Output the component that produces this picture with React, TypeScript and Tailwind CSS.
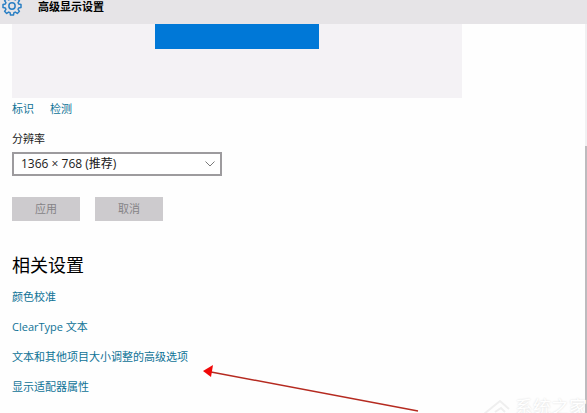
// src/pages/AdvancedDisplaySettings.tsx
import { useState } from 'react';
import type { ReactNode } from 'react';

const relatedLinks = [
  '颜色校准',
  'ClearType 文本',
  '文本和其他项目大小调整的高级选项',
  '显示适配器属性',
];

const resolutions = ['1366 × 768 (推荐)', '1280 × 720', '1024 × 768', '800 × 600'];

function SettingsLink({ children }: { children: ReactNode }) {
  return (
    <a href="#" className="text-[#0e7296] hover:text-gray-500">
      {children}
    </a>
  );
}

function GearIcon() {
  return (
    <svg viewBox="0 0 24 24" className="size-[18px] shrink-0 overflow-visible" fill="none" stroke="#2a7fc4" strokeWidth="2" strokeLinejoin="round" aria-hidden="true">
      <path d="M10 0h4l.6 3.1 1.8.8L19.100 2.100l2.800 2.800-1.800 2.700.8 1.800L24 10v4l-3.100.6-.8 1.800 1.800 2.700-2.800 2.800-2.700-1.800-1.800.8L14 24h-4l-.6-3.100-1.800-.8-2.700 1.800-2.800-2.800 1.800-2.700-.8-1.800L0 14v-4l3.100-.6.8-1.800-1.800-2.700 2.800-2.800 2.700 1.800 1.800-.8z" />
      <circle cx="12" cy="12" r="4.200" />
    </svg>
  );
}

export default function AdvancedDisplaySettings() {
  const [resolution, setResolution] = useState(resolutions[0]);

  return (
    <div className="relative flex h-screen flex-col overflow-hidden bg-[#fefefe] font-['Open_Sans','Noto_Sans_CJK_SC',sans-serif] text-[11px] leading-4 text-[#1a1a1a]">
      {/* Title bar, scrolled partly out of view */}
      <header className="h-6 shrink-0 bg-[#e6e4e7]">
        <div className="flex h-3 items-center gap-[17px] px-[3px]">
          <GearIcon />
          <h1 className="pt-px leading-3 font-bold text-black">高级显示设置</h1>
        </div>
      </header>

      <div className="flex min-h-0 flex-1">
        <main className="min-w-0 flex-1 pl-3">
          {/* Monitor preview */}
          <div className="flex h-[74px] max-w-[450px] justify-center bg-[#f4f2f5]">
            <div className="h-[25px] w-[164px] bg-[#0078d7]" />
          </div>

          <div className="mt-[3px] flex gap-4">
            <SettingsLink>标识</SettingsLink>
            <SettingsLink>检测</SettingsLink>
          </div>

          <label htmlFor="resolution" className="mt-[14px] block">
            分辨率
          </label>
          <div className="relative mt-[5px] w-[210px]">
            <select
              id="resolution"
              value={resolution}
              onChange={(e) => setResolution(e.target.value)}
              className="block h-6 w-full appearance-none border-2 border-[#9d9b9e] bg-white pl-[7px] text-xs leading-4 outline-none"
            >
              {resolutions.map((item) => (
                <option key={item}>{item}</option>
              ))}
            </select>
            <svg viewBox="0 0 10 6" className="pointer-events-none absolute top-[9px] right-[7px] h-[6px] w-[10px]" fill="none" stroke="#7a7a7a" aria-hidden="true">
              <path d="M.5.5 5 5 9.500.5" />
            </svg>
          </div>

          <div className="mt-[21px] flex gap-[15px]">
            <button type="button" disabled className="h-6 w-[68px] bg-[#cdcbce] text-[#858386]">
              应用
            </button>
            <button type="button" disabled className="h-6 w-[68px] bg-[#cdcbce] text-[#858386]">
              取消
            </button>
          </div>

          <h2 className="mt-8 text-lg leading-6 text-black">相关设置</h2>
          <ul className="mt-3 space-y-[14px]">
            {relatedLinks.map((item) => (
              <li key={item}>
                <SettingsLink>{item}</SettingsLink>
              </li>
            ))}
          </ul>
        </main>

        {/* Scrollbar */}
        <div className="w-[2px] bg-[#f1f0f2] pt-[122px]">
          <div className="h-full bg-[#bdbbbe]" />
        </div>
      </div>

      {/* Pointer to the text size option */}
      <svg viewBox="0 0 216 47" className="pointer-events-none absolute top-[365px] left-[203px] h-[47px] w-[216px]" aria-hidden="true">
        <path d="M8 7 215 46" stroke="#b52a20" strokeWidth="1.5" />
        <path d="M0 6 10 0 8 12z" fill="#f00808" />
      </svg>

      {/* Watermark */}
      <div className="pointer-events-none absolute right-0 -bottom-1 flex items-end text-lg leading-5 text-white [text-shadow:0_0_2px_#d8d8d8]" aria-hidden="true">
        <svg viewBox="0 0 32 18" className="h-[18px] w-8" fill="none" stroke="#efefef" strokeWidth="2">
          <path d="M1 15 17 2l9 8M12 13l6-4 4 4" />
        </svg>
        系统之家
      </div>
    </div>
  );
}
